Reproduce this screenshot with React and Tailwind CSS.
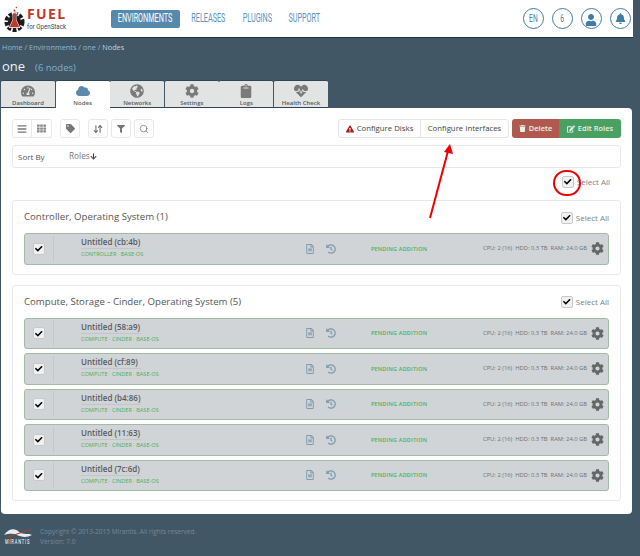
import { ArrowDownUp, Search } from "lucide-react";
import {
  FaTachometerAlt, FaCloud, FaGlobeAmericas, FaCog, FaClipboard, FaHeartbeat, FaBars, FaTh, FaTag, FaFilter,
  FaExclamationTriangle, FaTrash, FaEdit, FaCheck, FaRegFileAlt, FaHistory, FaUser, FaBell, FaArrowDown,
} from "react-icons/fa";

const tabs = [
  { label: "Dashboard", icon: FaTachometerAlt },
  { label: "Nodes", icon: FaCloud, active: true },
  { label: "Networks", icon: FaGlobeAmericas },
  { label: "Settings", icon: FaCog },
  { label: "Logs", icon: FaClipboard },
  { label: "Health Check", icon: FaHeartbeat },
];

const computeNodes = ["58:a9", "cf:89", "b4:86", "11:63", "7c:6d"];

// no condensed font installed, so squeeze Roboto
const Narrow = ({ children, className = "" }) => (
  <span className={`font-['Roboto',sans-serif] inline-block whitespace-nowrap scale-x-[.58] ${className}`}>{children}</span>
);

const NavItem = ({ children, className = "" }) => (
  <div className={`flex items-center justify-center text-[12.5px] ${className}`}>
    <Narrow>{children}</Narrow>
  </div>
);

const Logo = () => (
  <div className="flex items-center w-[66px] h-[37px] ml-[3px] shrink-0">
    <svg width="23" height="28" viewBox="0 0 24 28" className="shrink-0">
      <circle cx="12" cy="5" r="1" fill="#c0392b" />
      <circle cx="14" cy="2" r="0.8" fill="#c0392b" />
      <circle cx="12" cy="17" r="8.5" fill="none" stroke="#1b1b1b" strokeWidth="4" strokeDasharray="4 1.6" />
      <circle cx="12" cy="17" r="7" fill="#1b1b1b" />
      <path d="M9 7h6v1.5h-1v6l4 9H6l4-9v-6H9z" fill="#fff" />
      <path d="M10.5 8h3v6.5l3.5 8H7l3.5-8z" fill="#c0392b" />
    </svg>
    <div className="ml-[1px] leading-none">
      <div className="font-['Open_Sans',sans-serif] font-bold text-[14px] tracking-[1.4px] text-[#c0392b] leading-[15px]">FUEL</div>
      <div className="mt-[2px] text-[7px] text-[#444] leading-[8px] font-['Roboto',sans-serif] whitespace-nowrap scale-x-[.88] origin-left">for OpenStack</div>
    </div>
  </div>
);

const RoundBtn = ({ children }) => (
  <div className="w-[21px] h-[21px] rounded-full border-[1.5px] border-[#3f7da6] flex items-center justify-center text-[#3f7da6] text-[11.5px] bg-white overflow-hidden">
    {children}
  </div>
);

const ToolBtn = ({ children, className = "" }) => (
  <div className={`w-[20px] h-[19px] border border-[#e8e8e8] rounded-[3px] flex items-center justify-center text-[#666] bg-white ${className}`}>
    {children}
  </div>
);

const Check = () => (
  <span className="w-[12px] h-[12px] border border-[#c9c9c9] bg-[#f1f1f1] rounded-[2px] flex items-center justify-center text-black shrink-0">
    <FaCheck className="text-[7.5px]" />
  </span>
);

const SelectAll = () => (
  <div className="flex items-center gap-[3px] text-[8px] text-[#7b8288]">
    <Check />
    <span>Select All</span>
  </div>
);

const NodeRow = ({ id, roles }) => (
  <div className="flex items-center h-[31.5px] bg-[#d1d4d7] border border-[#a3bba3] rounded-[3px] text-[#6b7176]">
    <div className="w-[29px] h-[26px] border-r border-[#c5c8cb] flex items-center justify-center">
      <Check />
    </div>
    <div className="ml-[27px] w-[224px] -mt-[2px]">
      <div className="text-[8px] text-[#555a60] font-semibold leading-[10px] pb-[1px] border-b border-[#c3c6c9] w-[60px] whitespace-nowrap">Untitled ({id})</div>
      <div className="text-[5.6px] text-[#4caf50] leading-[8px] mt-[1px] whitespace-nowrap">{roles}</div>
    </div>
    <FaRegFileAlt className="text-[10px] text-[#7f9bb0]" />
    <FaHistory className="ml-[11px] text-[10px] text-[#7f9bb0]" />
    <div className="ml-[35px] w-[111px] text-[5.5px] font-semibold text-[#4caf50] tracking-[0.2px] whitespace-nowrap">PENDING ADDITION</div>
    <div className="text-[5.8px] text-[#6b7176] w-[105px] text-right whitespace-nowrap">CPU: 2 (16)&nbsp; HDD: 0.3 TB&nbsp; RAM: 24.0 GB</div>
    <FaCog className="ml-[4px] text-[13px] text-[#666]" />
  </div>
);

const Group = ({ title, children, className = "" }) => (
  <div className={`border border-[#e8e8e8] rounded-[3px] px-[11px] pt-[9px] pb-[9px] ${className}`}>
    <div className="flex items-center justify-between h-[15px] mb-[8px]">
      <span className="text-[9.65px] text-[#555]">{title}</span>
      <SelectAll />
    </div>
    <div className="flex flex-col gap-[4px]">{children}</div>
  </div>
);

export default function App() {
  return (
    <div className="relative w-[640px] h-[556px] overflow-hidden bg-[#415766] font-['Open_Sans',sans-serif]">
      {/* header */}
      <div className="w-[633px] h-[38px] bg-white border-b border-[#1f3347] flex items-center">
        <Logo />
        <div className="flex items-center ml-[42px] text-[#5a93bd]">
          <NavItem className="w-[69px] h-[18px] bg-[#5689ae] text-white rounded-[2px]">ENVIRONMENTS</NavItem>
          <NavItem className="ml-[11px] w-[34px]">RELEASES</NavItem>
          <NavItem className="ml-[18px] w-[28px]">PLUGINS</NavItem>
          <NavItem className="ml-[18px] w-[30px]">SUPPORT</NavItem>
        </div>
        <div className="ml-auto mr-[2.5px] flex items-center gap-[8px]">
          <RoundBtn><Narrow className="scale-x-[.7]">EN</Narrow></RoundBtn>
          <RoundBtn><Narrow className="scale-x-[.7]">6</Narrow></RoundBtn>
          <RoundBtn><FaUser className="text-[12px] mt-[2px]" /></RoundBtn>
          <RoundBtn><FaBell className="text-[11px]" /></RoundBtn>
        </div>
      </div>

      {/* breadcrumb + title */}
      <div className="pl-[2px] h-[42px]">
        <div className="text-[7.3px] leading-[10px] pt-[4px] h-[14px] text-[#8fb7d3]">
          Home / Environments / one / <span className="text-[#c3d0da]">Nodes</span>
        </div>
        <div className="flex items-baseline mt-[6px]">
          <span className="text-[13px] leading-[16px] text-[#eef2f5]">one</span>
          <span className="ml-[10px] text-[9.5px] text-[#7fb0d3]">(6 nodes)</span>
        </div>
      </div>

      {/* tabs */}
      <div className="flex pl-[1px] h-[28px] gap-[0.6px]">
        {tabs.map(({ label, icon: Icon, active }) => (
          <div
            key={label}
            className={`w-[54px] flex flex-col items-center rounded-t-[2px] border-t border-[#2f4556] ${active ? "bg-white text-[#5b89ac]" : "bg-[#e2e3e3] text-[#7a7a7a] border-b"}`}
          >
            <Icon className="text-[14px] mt-[3px]" />
            <span className="text-[6px] font-semibold text-[#555b60] leading-[8px] mt-[1px]">{label}</span>
          </div>
        ))}
      </div>

      {/* main panel */}
      <div className="w-[631px] h-[406px] ml-[1px] bg-white rounded-b-[4px] rounded-tr-[4px] px-[11px] pt-[11px]">
        <div className="flex items-center h-[19px]">
          <div className="flex">
            <ToolBtn className="rounded-r-none bg-[#e4e4e4] border-[#d8d8d8]"><FaBars className="text-[10px] text-[#777]" /></ToolBtn>
            <ToolBtn className="rounded-l-none border-l-0"><FaTh className="text-[9px] text-[#888]" /></ToolBtn>
          </div>
          <ToolBtn className="ml-[8px]"><FaTag className="text-[9px] text-[#777]" /></ToolBtn>
          <ToolBtn className="ml-[8px]"><ArrowDownUp size={10} strokeWidth={2.5} /></ToolBtn>
          <ToolBtn className="ml-[3px]"><FaFilter className="text-[8px] text-[#777]" /></ToolBtn>
          <ToolBtn className="ml-[3px]"><Search size={10} strokeWidth={1.6} /></ToolBtn>

          <div className="ml-auto flex items-center h-[19px] text-[7.8px] text-[#444] border border-[#e4e4e4] rounded-[3px]">
            <div className="w-[82px] h-full flex items-center justify-center gap-[3px] border-r border-[#e4e4e4]">
              <FaExclamationTriangle className="text-[8px] text-[#a81c1c]" />
              <span>Configure Disks</span>
            </div>
            <div className="w-[87px] text-center whitespace-nowrap">Configure Interfaces</div>
          </div>
          <div className="ml-[3px] w-[109px] h-[19px] flex text-[7.5px] font-semibold text-[#e9f2ea] rounded-[3px] overflow-hidden">
            <div className="w-[47px] bg-[#b05a4f] flex items-center justify-center gap-[3px]">
              <FaTrash className="text-[7px]" />
              <span>Delete</span>
            </div>
            <div className="w-[62px] bg-[#4a9f63] flex items-center justify-center gap-[3px]">
              <FaEdit className="text-[8px]" />
              <span>Edit Roles</span>
            </div>
          </div>
        </div>

        <div className="mt-[7px] h-[23px] border border-[#e8e8e8] rounded-[3px] flex items-center text-[8px] text-[#555]">
          <span className="ml-[5px] w-[51px]">Sort By</span>
          <span className="text-[#777] text-[8.3px]">Roles</span>
          <FaArrowDown className="text-[7px] text-[#444]" />
        </div>

        <div className="flex justify-end items-center h-[32px] pb-[4px] pr-[11px]">
          <SelectAll />
        </div>

        <Group title="Controller, Operating System (1)">
          <NodeRow id="cb:4b" roles="CONTROLLER · BASE-OS" />
        </Group>

        <Group title="Compute, Storage - Cinder, Operating System (5)" className="mt-[10px]">
          {computeNodes.map((id) => (
            <NodeRow key={id} id={id} roles="COMPUTE · CINDER · BASE-OS" />
          ))}
        </Group>
      </div>

      {/* footer */}
      <div className="flex items-center pl-[3px] mt-[12px]">
        <div className="w-[30px] flex flex-col items-center">
          <svg width="30" height="12" viewBox="0 0 30 12">
            <path d="M1 8 C7 0 13 2 16 5 C20 8 26 6 29 8 C24 11 18 10 14 8 C9 6 5 7 1 8z" fill="#e8edf0" />
            <path d="M5 10 L29 2" stroke="#a8402f" strokeWidth="1" />
          </svg>
          <Narrow className="text-[7px] tracking-[1.4px] leading-[6px] text-white scale-x-[.7]">MIRANTIS</Narrow>
        </div>
        <div className="ml-[7px] mt-[1px] text-[6.5px] leading-[9.5px] text-[#74889a]">
          <div>Copyright © 2013-2015 Mirantis. All rights reserved.</div>
          <div>Version: 7.0</div>
        </div>
      </div>

      {/* annotations drawn over the screenshot */}
      <div className="absolute left-[553px] top-[170px] w-[28px] h-[26px] rounded-full border-2 border-[#f00000]" />
      <svg className="absolute left-[425px] top-[143px]" width="30" height="76" viewBox="0 0 30 76">
        <path d="M5 75 L23 8" stroke="#f00000" strokeWidth="2" />
        <path d="M25 1 L28 11 L19 9z" fill="#f00000" />
      </svg>
    </div>
  );
}
